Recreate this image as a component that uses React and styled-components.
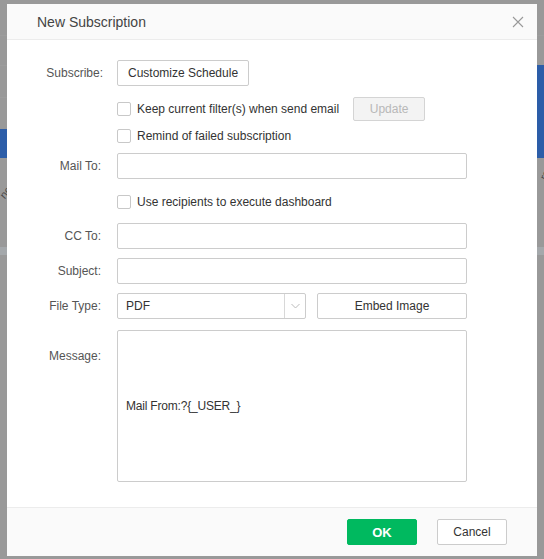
import React from "react";
import styled, { createGlobalStyle } from "styled-components";

const Global = createGlobalStyle`
  html, body { margin: 0; padding: 0; }
  body {
    width: 544px; height: 559px; overflow: hidden;
    font-family: "Liberation Sans", Arial, sans-serif;
    background: #999999;
  }
  * { box-sizing: border-box; }
`;

const Page = styled.div`
  position: relative;
  width: 544px;
  height: 559px;
  background: #999999;
  overflow: hidden;
`;

const BgLine = styled.div`
  position: absolute;
  left: 0;
  right: 0;
  top: ${(p) => p.$top}px;
  height: ${(p) => p.$h || 1}px;
  background: ${(p) => p.$color || "#9d9d9d"};
`;

const BgBar = styled.div`
  position: absolute;
  top: ${(p) => p.$top}px;
  height: ${(p) => p.$h}px;
  ${(p) => (p.$side === "left" ? "left: 0;" : "right: 0;")}
  width: ${(p) => p.$w}px;
  background: #2c5da8;
`;

const BgText = styled.div`
  position: absolute;
  top: ${(p) => p.$top}px;
  left: ${(p) => p.$left}px;
  font-size: 11px;
  color: #4a4a4a;
  transform: rotate(${(p) => p.$rot}deg);
  transform-origin: left top;
  white-space: nowrap;
`;

const Dialog = styled.div`
  position: absolute;
  left: 7px;
  top: 4px;
  width: 530px;
  height: 552px;
  background: #ffffff;
  display: flex;
  flex-direction: column;
`;

const Header = styled.div`
  height: 36px;
  background: #fafafa;
  border-bottom: 1px solid #ececec;
  display: flex;
  align-items: center;
  justify-content: space-between;
  padding: 0 12px 0 30px;
  flex-shrink: 0;
`;

const Title = styled.div`
  font-size: 14px;
  color: #444;
  padding-top: 1px;
`;

const Close = styled.button`
  border: none;
  background: transparent;
  padding: 0;
  width: 14px;
  height: 14px;
  display: flex;
  align-items: center;
  justify-content: center;
  cursor: pointer;
`;

const Body = styled.div`
  flex: 1;
  padding: 20px 70px 0 0;
  display: flex;
  flex-direction: column;
`;

const Row = styled.div`
  display: flex;
  align-items: ${(p) => p.$align || "center"};
  margin-top: ${(p) => p.$mt || 0}px;
  height: ${(p) => p.$h}px;
`;

const Label = styled.div`
  width: ${(p) => p.$w || 94}px;
  flex-shrink: 0;
  text-align: right;
  font-size: 12px;
  color: #555;
  margin-right: ${(p) => 110 - (p.$w || 94)}px;
  padding-top: ${(p) => p.$pt || 0}px;
`;

const Control = styled.div`
  flex: 1;
  display: flex;
  align-items: ${(p) => p.$align || "center"};
  gap: ${(p) => p.$gap || 0}px;
  height: 100%;
`;

const Btn = styled.button`
  height: ${(p) => p.$h || 26}px;
  width: ${(p) => (p.$w ? p.$w + "px" : "auto")};
  padding: 0 10px;
  font-family: "Liberation Sans", Arial, sans-serif;
  font-size: 12px;
  color: ${(p) => (p.$disabled ? "#b8b8b8" : "#333")};
  background: ${(p) => (p.$disabled ? "#f3f3f3" : "#fff")};
  border: 1px solid ${(p) => (p.$disabled ? "#d4d4d4" : "#cccccc")};
  border-radius: 2px;
  cursor: pointer;
  flex-shrink: 0;
`;

const CheckWrap = styled.label`
  display: flex;
  align-items: center;
  font-size: 12px;
  color: #333;
  cursor: pointer;
`;

const Box = styled.span`
  width: 14px;
  height: 14px;
  border: 1px solid #c8c8c8;
  border-radius: 2px;
  background: #fff;
  margin-right: 6px;
  flex-shrink: 0;
`;

const Input = styled.input`
  width: 100%;
  height: 26px;
  border: 1px solid #cccccc;
  border-radius: 2px;
  padding: 0 8px;
  font-family: "Liberation Sans", Arial, sans-serif;
  font-size: 12px;
  color: #333;
  outline: none;
`;

const Select = styled.div`
  width: 189px;
  height: 26px;
  border: 1px solid #cccccc;
  border-radius: 2px;
  display: flex;
  align-items: stretch;
  flex-shrink: 0;
`;

const SelectValue = styled.div`
  flex: 1;
  display: flex;
  align-items: center;
  padding-left: 8px;
  font-size: 12px;
  color: #333;
`;

const SelectArrow = styled.div`
  width: 21px;
  border-left: 1px solid #d8d8d8;
  display: flex;
  align-items: center;
  justify-content: center;
`;

const Message = styled.div`
  width: 100%;
  height: 152px;
  border: 1px solid #cccccc;
  border-radius: 2px;
  padding: 0 8px;
  font-size: 12px;
  color: #333;
  display: flex;
  align-items: center;
  letter-spacing: -0.2px;
`;

const Footer = styled.div`
  height: 49px;
  background: #fafafa;
  border-top: 1px solid #ececec;
  display: flex;
  align-items: center;
  justify-content: flex-end;
  gap: 20px;
  padding: 0 30px 0 0;
  flex-shrink: 0;
`;

const FootBtn = styled.button`
  width: 70px;
  height: 26px;
  border-radius: 2px;
  font-family: "Liberation Sans", Arial, sans-serif;
  font-size: ${(p) => (p.$primary ? 13 : 12)}px;
  font-weight: ${(p) => (p.$primary ? 700 : 400)};
  color: ${(p) => (p.$primary ? "#fff" : "#333")};
  background: ${(p) => (p.$primary ? "#00b95f" : "#fff")};
  border: 1px solid ${(p) => (p.$primary ? "#00b95f" : "#cccccc")};
  cursor: pointer;
`;

const Check = ({ children }) => (
  <CheckWrap>
    <Box />
    {children}
  </CheckWrap>
);

export default function App() {
  return (
    <Page>
      <Global />
      <BgLine $top={35} />
      <BgLine $top={65} />
      <BgLine $top={97} />
      <BgLine $top={247} $h={8} $color="#a4a8ab" />
      <BgBar $side="left" $top={129} $h={29} $w={7} />
      <BgBar $side="right" $top={65} $h={93} $w={7} />
      <BgText $top={193} $left={-3} $rot={-50}>ne</BgText>
      <BgText $top={176} $left={537} $rot={-60}>ro</BgText>
      <Dialog>
        <Header>
          <Title>New Subscription</Title>
          <Close aria-label="close">
            <svg width="12" height="12" viewBox="0 0 12 12">
              <path d="M1 1 L11 11 M11 1 L1 11" stroke="#999" strokeWidth="1.1" fill="none" />
            </svg>
          </Close>
        </Header>
        <Body>
          <Row $h={26}>
            <Label $w={96}>Subscribe:</Label>
            <Control>
              <Btn>Customize Schedule</Btn>
            </Control>
          </Row>
          <Row $h={24} $mt={11}>
            <Label />
            <Control $gap={14}>
              <Check>Keep current filter(s) when send email</Check>
              <Btn $disabled $w={72} $h={24}>Update</Btn>
            </Control>
          </Row>
          <Row $h={20} $mt={5}>
            <Label />
            <Control>
              <Check>Remind of failed subscription</Check>
            </Control>
          </Row>
          <Row $h={26} $mt={7}>
            <Label>Mail To:</Label>
            <Control>
              <Input />
            </Control>
          </Row>
          <Row $h={20} $mt={13}>
            <Label />
            <Control>
              <Check>Use recipients to execute dashboard</Check>
            </Control>
          </Row>
          <Row $h={26} $mt={11}>
            <Label>CC To:</Label>
            <Control>
              <Input />
            </Control>
          </Row>
          <Row $h={26} $mt={9}>
            <Label>Subject:</Label>
            <Control>
              <Input />
            </Control>
          </Row>
          <Row $h={26} $mt={9}>
            <Label>File Type:</Label>
            <Control $gap={11}>
              <Select>
                <SelectValue>PDF</SelectValue>
                <SelectArrow>
                  <svg width="9" height="6" viewBox="0 0 9 6">
                    <path d="M0.5 1 L4.5 5 L8.5 1" stroke="#bbb" strokeWidth="1" fill="none" />
                  </svg>
                </SelectArrow>
              </Select>
              <Btn $w={150}>Embed Image</Btn>
            </Control>
          </Row>
          <Row $h={152} $mt={11} $align="flex-start">
            <Label $pt={19}>Message:</Label>
            <Control $align="flex-start">
              <Message>Mail From:?{"{"}_USER_{"}"}</Message>
            </Control>
          </Row>
        </Body>
        <Footer>
          <FootBtn $primary>OK</FootBtn>
          <FootBtn>Cancel</FootBtn>
        </Footer>
      </Dialog>
    </Page>
  );
}
